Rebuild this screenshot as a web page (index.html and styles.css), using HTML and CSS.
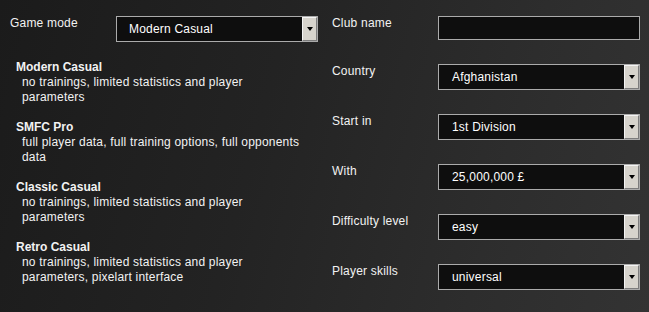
FILE: index.html
```html
<!DOCTYPE html>
<html>
<head>
<meta charset="utf-8">
<link rel="stylesheet" href="styles.css">
</head>
<body>
<div class="screen">
  <section class="left">
    <div class="mode-row">
      <span class="label">Game mode</span>
      <div class="field select">Modern Casual<span class="btn"><span class="arrow"></span></span></div>
    </div>
    <div class="modes">
      <div class="mode">
        <div class="mode-title">Modern Casual</div>
        <p class="mode-desc">no trainings, limited statistics and player parameters</p>
      </div>
      <div class="mode">
        <div class="mode-title">SMFC Pro</div>
        <p class="mode-desc">full player data, full training options, full opponents data</p>
      </div>
      <div class="mode">
        <div class="mode-title">Classic Casual</div>
        <p class="mode-desc">no trainings, limited statistics and player parameters</p>
      </div>
      <div class="mode">
        <div class="mode-title">Retro Casual</div>
        <p class="mode-desc">no trainings, limited statistics and player parameters, pixelart interface</p>
      </div>
    </div>
  </section>
  <section class="right">
    <span class="label">Club name</span>
    <div class="field input"></div>
    <span class="label">Country</span>
    <div class="field select">Afghanistan<span class="btn"><span class="arrow"></span></span></div>
    <span class="label">Start in</span>
    <div class="field select">1st Division<span class="btn"><span class="arrow"></span></span></div>
    <span class="label">With</span>
    <div class="field select">25,000,000 £<span class="btn"><span class="arrow"></span></span></div>
    <span class="label">Difficulty level</span>
    <div class="field select">easy<span class="btn"><span class="arrow"></span></span></div>
    <span class="label">Player skills</span>
    <div class="field select">universal<span class="btn"><span class="arrow"></span></span></div>
  </section>
</div>
</body>
</html>
```
FILE: styles.css
```css
* { box-sizing: border-box; }
html, body {
  margin: 0;
  padding: 0;
  width: 649px;
  height: 312px;
  overflow: hidden;
}
body {
  font-family: "Liberation Sans", Arial, sans-serif;
  font-size: 12px;
  line-height: 15px;
  letter-spacing: 0.2px;
  color: #f2f2f2;
  background: linear-gradient(105deg, #1b1b1b 0%, #232323 40%, #2d2d2d 75%, #333333 100%);
}
.screen {
  display: flex;
  height: 312px;
}
.left {
  width: 320px;
  padding: 16px 0 0 10px;
}
.mode-row {
  display: flex;
  align-items: flex-start;
}
.mode-row .label {
  width: 106px;
}
.field {
  position: relative;
  width: 202px;
  border: 1px solid #ababab;
  background: #0e0e0e;
  color: #ffffff;
}
.select {
  height: 26px;
  line-height: 25px;
  padding-left: 12px;
}
.input {
  height: 24px;
}
.btn {
  position: absolute;
  top: 0;
  right: 0;
  width: 15px;
  height: 24px;
  background: #d6d3cc;
  border-top: 1px solid #f4f4f4;
  border-left: 1px solid #f4f4f4;
  border-right: 1px solid #7c7c7c;
  border-bottom: 1px solid #7c7c7c;
  display: flex;
  align-items: center;
  justify-content: center;
}
.arrow {
  width: 0;
  height: 0;
  border-left: 3.5px solid transparent;
  border-right: 3.5px solid transparent;
  border-top: 4px solid #000;
}
.modes {
  margin-top: 18px;
  padding-left: 6px;
  display: flex;
  flex-direction: column;
  gap: 15px;
}
.mode-title {
  font-weight: bold;
  letter-spacing: 0;
}
.mode-desc {
  margin: 0;
  padding-left: 6px;
  width: 288px;
}
.right {
  padding: 16px 0 0 12px;
  display: grid;
  grid-template-columns: 106px 202px;
  grid-auto-rows: min-content;
  row-gap: 24px;
  align-content: start;
}
.right .select {
  padding-left: 13px;
}
```
